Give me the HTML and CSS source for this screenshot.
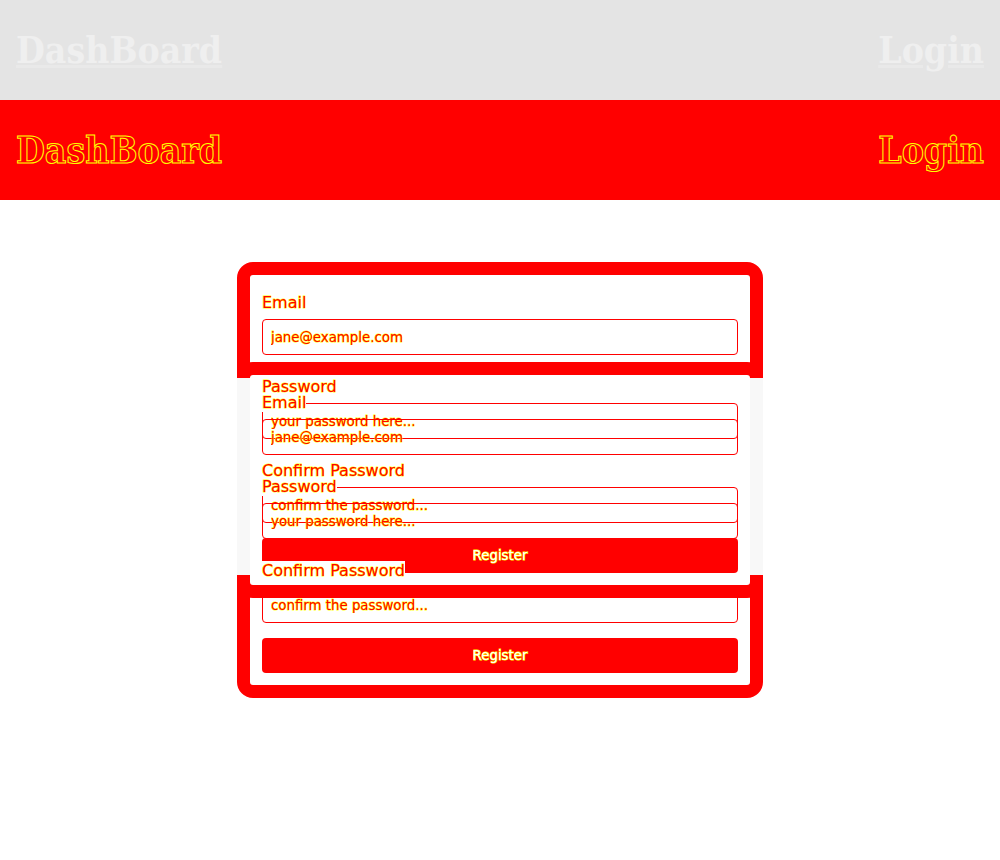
FILE: index.html
```html
<!DOCTYPE html>
<html lang="en">
<head>
<meta charset="utf-8">
<title>DashBoard – Register</title>
<link rel="stylesheet" href="styles.css">
</head>
<body>
<header class="bar bar-faded">
  <a class="bar-link" href="#">DashBoard</a>
  <a class="bar-link" href="#">Login</a>
</header>
<header class="bar bar-diff">
  <span class="bar-link">DashBoard</span>
  <span class="bar-link">Login</span>
</header>
<main class="page">
  <div class="stage">
    <form class="card">
      <div class="field">
        <label class="label">Email</label>
        <input class="input" type="text" value="jane@example.com">
      </div>
      <div class="field">
        <label class="label">Password</label>
        <input class="input" type="text" placeholder="your password here...">
      </div>
      <div class="field field-last">
        <label class="label">Confirm Password</label>
        <input class="input" type="text" placeholder="confirm the password...">
      </div>
      <button class="button" type="button">Register</button>
    </form>
    <form class="card card-ghost" aria-hidden="true">
      <div class="field">
        <label class="label">Email</label>
        <input class="input" type="text" value="jane@example.com">
      </div>
      <div class="field">
        <label class="label">Password</label>
        <input class="input" type="text" placeholder="your password here...">
      </div>
      <div class="field field-last">
        <label class="label">Confirm Password</label>
        <input class="input" type="text" placeholder="confirm the password...">
      </div>
      <button class="button" type="button">Register</button>
    </form>
  </div>
</main>
</body>
</html>
```
FILE: styles.css
```css
html, body {
  margin: 0;
  padding: 0;
  background: #ffffff;
}

body {
  font-family: "DejaVu Sans", sans-serif;
}

.bar {
  height: 100px;
  display: flex;
  align-items: center;
  justify-content: space-between;
  padding: 0 16px 0 16px;
  box-sizing: border-box;
}

.bar-link {
  font-family: "DejaVu Serif Condensed", "DejaVu Serif", serif;
  font-stretch: condensed;
  font-weight: bold;
  font-size: 37px;
  line-height: 42px;
}

.bar-faded {
  background: #e4e4e4;
}

.bar-faded .bar-link {
  color: #efefef;
  text-decoration: underline;
  text-decoration-color: #e9e9e9;
}

.bar-diff {
  background: #ff0000;
}

.bar-diff .bar-link {
  color: #ff0000;
  -webkit-text-stroke: 1px #ffff00;
}

.page {
  padding-top: 62px;
  padding-bottom: 40px;
}

.stage {
  display: grid;
  width: 526px;
  margin: 0 auto;
}

.card {
  grid-area: 1 / 1;
  align-self: start;
  box-sizing: border-box;
  width: 526px;
  border: 13px solid #ff0000;
  border-radius: 16px;
  padding: 18px 12px 12px;
  background: #ffffff;
  margin: 0;
}

.card-ghost {
  position: relative;
  margin-top: 100px;
  background: transparent;
}

.card-ghost::before,
.card-ghost::after {
  content: "";
  position: absolute;
  top: 3px;
  width: 13px;
  height: 197px;
  background: #f8f8f8;
}

.card-ghost::before {
  left: -13px;
}

.card-ghost::after {
  right: -13px;
}

.card-ghost .label {
  width: fit-content;
  background: #ffffff;
}

.field {
  margin-bottom: 22px;
}

.field-last {
  margin-bottom: 15px;
}

.label {
  display: block;
  font-size: 16px;
  line-height: 19px;
  margin-bottom: 7px;
  color: #ff0000;
  -webkit-text-stroke: 1px #ffff00;
  paint-order: stroke fill;
}

.input {
  display: block;
  box-sizing: border-box;
  width: 100%;
  height: 36px;
  padding: 0 8px;
  border: 1px solid #ff0000;
  border-radius: 4px;
  background: transparent;
  font-family: "DejaVu Sans", sans-serif;
  font-size: 13.333px;
  color: #ff0000;
  -webkit-text-stroke: 1px #ffff00;
  paint-order: stroke fill;
  outline: none;
}

.input::placeholder {
  color: #ff0000;
  opacity: 1;
  -webkit-text-stroke: 1px #ffff00;
  paint-order: stroke fill;
}

.button {
  display: block;
  box-sizing: border-box;
  width: 100%;
  height: 35px;
  border: 0;
  border-radius: 4px;
  background: #ff0000;
  font-family: "DejaVu Sans", sans-serif;
  font-size: 13.333px;
  color: #ffffff;
  -webkit-text-stroke: 1px #ffff00;
  paint-order: stroke fill;
  padding: 0;
}
```
